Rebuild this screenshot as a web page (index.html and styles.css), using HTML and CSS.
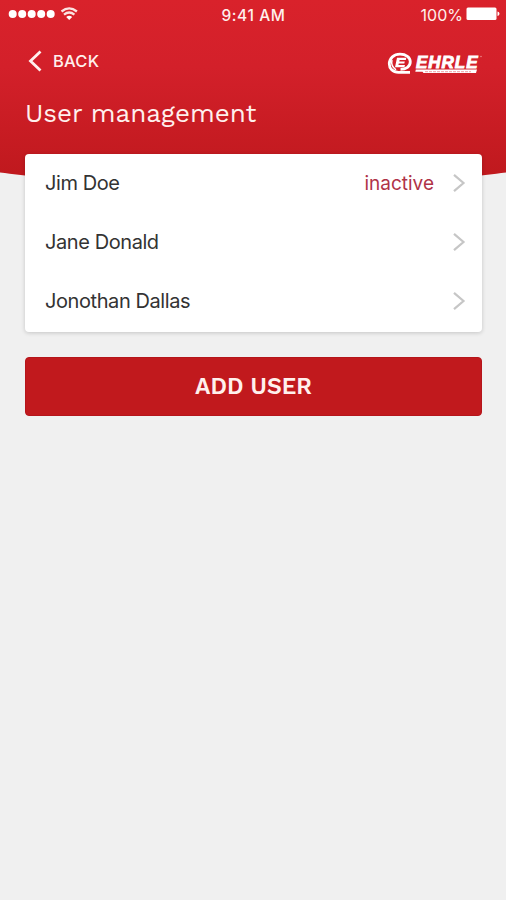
FILE: index.html
```html
<!DOCTYPE html>
<html lang="en">
<head>
<meta charset="utf-8">
<title>User management</title>
<link rel="stylesheet" href="styles.css">
</head>
<body>
<header class="header">
  <div class="status">
    <div class="signal">
      <svg width="72" height="16" viewBox="0 0 72 16" fill="#fff">
        <circle cx="4.700" cy="8" r="4"/><circle cx="14.200" cy="8" r="4"/><circle cx="23.700" cy="8" r="4"/><circle cx="33.200" cy="8" r="4"/><circle cx="42.700" cy="8" r="4"/>
        <g fill="none" stroke="#fbe3e1" stroke-width="2.300"><path d="M53.500 5.500Q61.200 -0.800 68.900 5.500"/><path d="M56 8.700Q61.200 4.400 66.400 8.700"/></g>
        <path d="M58.200 11Q61.200 8.500 64.200 11L61.200 14Z"/>
      </svg>
    </div>
    <div class="time">9:41 AM</div>
    <div class="power"><span class="percent">100%</span>
      <svg width="34" height="14" viewBox="0 0 34 14" fill="#fff"><rect x="0.500" y="0.500" width="30" height="12.500" rx="1.500"/><path d="M31.500 4.500Q33.500 5 33.500 6.800T31.500 9Z"/></svg>
    </div>
  </div>
  <nav class="nav">
    <a class="back"><svg width="14" height="22" viewBox="0 0 14 22"><path d="M12.500 1.500L2.500 11L12.500 20.500" fill="none" stroke="#fff0ed" stroke-width="2.800"/></svg><span>BACK</span></a>
    <svg class="logo" width="96" height="24" viewBox="0 0 96 24">
      <path d="M23 20.300H11.500C5.500 20.300 2.300 16.500 2.300 12C2.300 6 7 2.200 13 2.200C19 2.200 23.300 5.200 23.300 9.800C23.300 14.500 19 17.300 13.500 17.300" fill="none" stroke="#fff" stroke-width="2.800"/>
      <path d="M5 8Q3.500 14 9 17.800" fill="none" stroke="#fff" stroke-width="1.500"/>
      <path d="M10 5.800H19.300L18.800 7.900H12.600L12.300 9.400H17.800L17.300 11.500H11.800L11.400 13.100H18L17.400 15.300H8Z" fill="#fff"/>
      <text class="brand" x="29" y="15.500" textLength="61.500" lengthAdjust="spacing">EHRLE</text>
      <path d="M28.800 17.600H90L89 21H36.500L35.500 19.800H28.300Z" fill="#fff"/>
      <path d="M38 19.700H84" stroke="#e8868a" stroke-width="0.800" stroke-dasharray="3 1"/>
      <circle cx="94" cy="4.500" r="0.700" fill="#f19a9c"/>
    </svg>
  </nav>
  <h1>User management</h1>
</header>
<main>
  <ul class="card">
    <li><span>Jim Doe</span><span class="state">inactive</span><svg class="chev" width="14" height="20" viewBox="0 0 14 20"><path d="M2 1.800L11.500 10L2 18.200"/></svg></li>
    <li><span>Jane Donald</span><svg class="chev" width="14" height="20" viewBox="0 0 14 20"><path d="M2 1.800L11.500 10L2 18.200"/></svg></li>
    <li><span>Jonothan Dallas</span><svg class="chev" width="14" height="20" viewBox="0 0 14 20"><path d="M2 1.800L11.500 10L2 18.200"/></svg></li>
  </ul>
  <button class="add">ADD USER</button>
</main>
</body>
</html>
```
FILE: styles.css
```css
* { box-sizing: border-box; }
body { margin: 0; min-height: 900px; background: #f0f0f0; font-family: Inter, sans-serif; overflow: hidden; }
svg { display: block; flex: none; }
.header { height: 193px; padding: 0 24px 0 25px; background: linear-gradient(#d9222b, #d3202a 35%, #c0191e 90%); color: #fff0ed; clip-path: ellipse(636px 188px at 50% 0); }
.status { display: grid; grid-template-columns: 1fr auto 1fr; align-items: center; height: 30px; margin: 0 -17px; }
.signal { margin-top: -3px; }
.time { font-size: 15.500px; font-weight: 500; letter-spacing: 0.600px; }
.power { display: flex; justify-content: flex-end; align-items: center; gap: 3px; margin-right: -1px; font-size: 16px; }
.power svg { margin-top: -2px; }
.nav { display: flex; align-items: center; justify-content: space-between; height: 62px; }
.back { display: flex; align-items: center; gap: 11px; margin: -1px 0 0 3px; font-size: 16.500px; font-weight: 500; letter-spacing: 0.200px; }
.logo { margin: 5px -1px 0 0; }
.brand { font: italic 900 17px "Liberation Sans", sans-serif; fill: #fff; stroke: #fff; stroke-width: 0.900px; }
h1 { margin: 3px 0 0; font: 400 26px/36px "Work Sans", Inter, sans-serif; }
main { position: relative; margin: -39px 24px 0 25px; }
.card { margin: 0; padding: 0 16px 0 20px; height: 178px; list-style: none; background: #fff; border-radius: 4px; box-shadow: 0 1px 4px rgba(0,0,0,.18); }
li { display: flex; align-items: center; height: 58.700px; font-size: 20px; letter-spacing: -0.420px; color: #333; }
.chev { margin-left: auto; }
.chev path { fill: none; stroke: #c6c6c6; stroke-width: 2.200; }
.state { margin-left: auto; margin-right: 18px; color: #b03347; font-size: 19px; letter-spacing: 0; }
.state + .chev { margin-left: 0; }
.add { display: block; width: 100%; height: 59px; margin-top: 25px; padding: 0; border: 1px solid #b5151b; border-radius: 4px; background: #c1191d; color: #fff0ed; font: 600 23px "Work Sans", Inter, sans-serif; }
```
